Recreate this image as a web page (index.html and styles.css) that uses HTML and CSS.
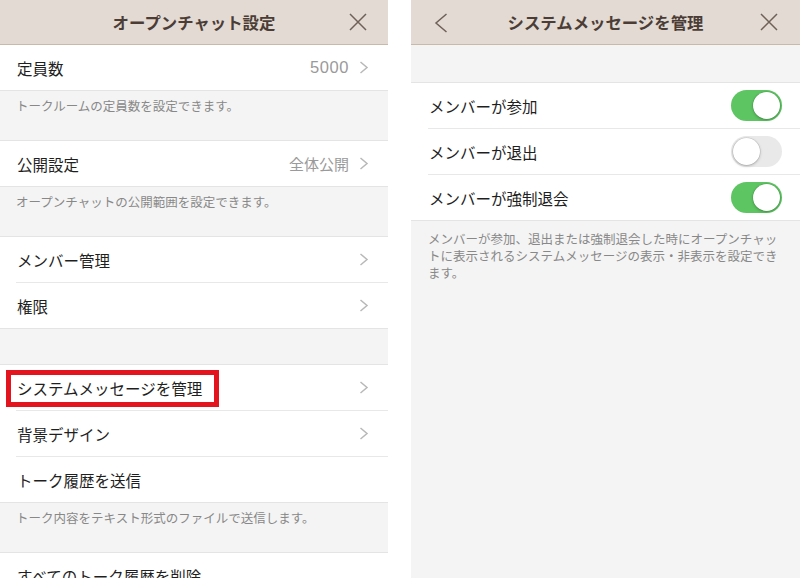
FILE: index.html
```html
<!DOCTYPE html>
<html lang="ja">

<head>
    <meta charset="UTF-8">
    <meta name="viewport" content="width=device-width, initial-scale=1.0">
    <title>オープンチャット設定</title>
    <link rel="stylesheet" href="styles.css">
</head>

<body>
    <div class="screens">

        <div class="panel left">
            <div class="header">
                <div class="header-side"></div>
                <div class="title">オープンチャット設定</div>
                <div class="header-side end">
                    <svg class="close" width="18" height="18" viewBox="0 0 18 18"><path d="M1 1L17 17M17 1L1 17" /></svg>
                </div>
            </div>

            <div class="group no-top">
                <div class="row">
                    <div class="row-body">
                        <span class="label">定員数</span>
                        <span class="value num">5000</span>
                        <svg class="chev" width="10" height="13" viewBox="0 0 10 13"><path d="M1.5 1L8 6.5L1.5 12" /></svg>
                    </div>
                </div>
            </div>
            <div class="note">トークルームの定員数を設定できます。</div>

            <div class="group">
                <div class="row">
                    <div class="row-body">
                        <span class="label">公開設定</span>
                        <span class="value">全体公開</span>
                        <svg class="chev" width="10" height="13" viewBox="0 0 10 13"><path d="M1.5 1L8 6.5L1.5 12" /></svg>
                    </div>
                </div>
            </div>
            <div class="note">オープンチャットの公開範囲を設定できます。</div>

            <div class="group">
                <div class="row">
                    <div class="row-body">
                        <span class="label">メンバー管理</span>
                        <svg class="chev" width="10" height="13" viewBox="0 0 10 13"><path d="M1.5 1L8 6.5L1.5 12" /></svg>
                    </div>
                </div>
                <div class="row">
                    <div class="row-body">
                        <span class="label">権限</span>
                        <svg class="chev" width="10" height="13" viewBox="0 0 10 13"><path d="M1.5 1L8 6.5L1.5 12" /></svg>
                    </div>
                </div>
            </div>
            <div class="spacer"></div>

            <div class="group">
                <div class="row marked">
                    <div class="row-body">
                        <span class="label">システムメッセージを管理</span>
                        <svg class="chev" width="10" height="13" viewBox="0 0 10 13"><path d="M1.5 1L8 6.5L1.5 12" /></svg>
                    </div>
                    <div class="highlight"></div>
                </div>
                <div class="row">
                    <div class="row-body">
                        <span class="label">背景デザイン</span>
                        <svg class="chev" width="10" height="13" viewBox="0 0 10 13"><path d="M1.5 1L8 6.5L1.5 12" /></svg>
                    </div>
                </div>
                <div class="row">
                    <div class="row-body">
                        <span class="label">トーク履歴を送信</span>
                    </div>
                </div>
            </div>
            <div class="note">トーク内容をテキスト形式のファイルで送信します。</div>

            <div class="group">
                <div class="row">
                    <div class="row-body">
                        <span class="label">すべてのトーク履歴を削除</span>
                    </div>
                </div>
            </div>
        </div>

        <div class="panel right">
            <div class="header">
                <div class="header-side">
                    <svg class="back" width="14" height="20" viewBox="0 0 14 20"><path d="M12.5 1L2 10L12.5 19" /></svg>
                </div>
                <div class="title">システムメッセージを管理</div>
                <div class="header-side end">
                    <svg class="close" width="18" height="18" viewBox="0 0 18 18"><path d="M1 1L17 17M17 1L1 17" /></svg>
                </div>
            </div>

            <div class="top-space"></div>

            <div class="group">
                <div class="row">
                    <div class="row-body">
                        <span class="label">メンバーが参加</span>
                        <div class="toggle on"><div class="knob"></div></div>
                    </div>
                </div>
                <div class="row">
                    <div class="row-body">
                        <span class="label">メンバーが退出</span>
                        <div class="toggle"><div class="knob"></div></div>
                    </div>
                </div>
                <div class="row">
                    <div class="row-body">
                        <span class="label">メンバーが強制退会</span>
                        <div class="toggle on"><div class="knob"></div></div>
                    </div>
                </div>
            </div>
            <div class="note long">メンバーが参加、退出または強制退会した時にオープンチャットに表示されるシステムメッセージの表示・非表示を設定できます。</div>
        </div>

    </div>
</body>

</html>
```

FILE: styles.css
```css
html,
body {
    margin: 0;
    height: 578px;
    overflow: hidden;
    background: #ffffff;
}

body {
    font-family: "Noto Sans CJK JP", "Noto Sans", sans-serif;
    color: #1f1f1f;
}

.screens {
    display: flex;
    gap: 23px;
    height: 578px;
}

.panel {
    background: #f4f4f4;
    display: flex;
    flex-direction: column;
}

.left {
    width: 388px;
}

.right {
    width: 389px;
}

/* header */

.header {
    height: 44px;
    background: #e2dad3;
    border-bottom: 1px solid #c8b9ab;
    display: grid;
    grid-template-columns: 1fr auto 1fr;
    align-items: center;
    flex-shrink: 0;
}

.title {
    font-size: 16.4px;
    font-weight: bold;
    color: #4b3d36;
    letter-spacing: 0;
}

.header-side {
    display: flex;
    align-items: center;
    padding-left: 23px;
}

.header-side.end {
    justify-content: flex-end;
    padding-left: 0;
    padding-right: 21px;
}

.right .header-side.end {
    padding-right: 22px;
}

.close path,
.back path {
    fill: none;
    stroke: #6f6058;
    stroke-width: 1.5;
}

.back {
    margin-top: 2px;
}

/* rows */

.group {
    background: #ffffff;
    border-top: 1px solid #e4e4e4;
    border-bottom: 1px solid #e4e4e4;
    flex-shrink: 0;
}

.group.no-top {
    border-top: none;
}

.row {
    padding-left: 16px;
    position: relative;
}

.right .row {
    padding-left: 17px;
}

.row-body {
    height: 45px;
    display: flex;
    align-items: center;
    border-bottom: 1px solid #e8e8e8;
    padding-right: 19px;
}

.right .row-body {
    padding-right: 18px;
}

.row:last-child .row-body {
    border-bottom: none;
}

.label {
    flex: 1;
    font-size: 15.5px;
    padding-left: 1px;
}

.value {
    font-size: 15px;
    color: #9a9a9a;
    margin-right: 10px;
}

.value.num {
    font-family: "Liberation Sans", sans-serif;
    font-size: 16.5px;
    letter-spacing: 0.6px;
}

.chev path {
    fill: none;
    stroke: #b8b8b8;
    stroke-width: 1.5;
}

.highlight {
    position: absolute;
    left: 6px;
    top: 5px;
    width: 203px;
    height: 27px;
    border: 5px solid #e3141e;
}

/* grey areas */

.note {
    font-size: 12.5px;
    line-height: 17px;
    color: #888888;
    padding: 6px 16px 0 16px;
    height: 43px;
    flex-shrink: 0;
}

.note.long {
    padding: 9px 16px 0 17px;
    height: auto;
}

.spacer {
    height: 35px;
    flex-shrink: 0;
}

.top-space {
    height: 37px;
    flex-shrink: 0;
}

/* toggles */

.toggle {
    width: 51px;
    height: 31px;
    border-radius: 16px;
    background: #e9e9e9;
    box-sizing: border-box;
    padding: 2px;
    display: flex;
    justify-content: flex-start;
}

.toggle.on {
    background: #5dc562;
    justify-content: flex-end;
}

.knob {
    width: 27px;
    height: 27px;
    border-radius: 50%;
    background: #ffffff;
    box-shadow: 0 1px 3px rgba(0, 0, 0, 0.25), 0 0 0 0.5px rgba(0, 0, 0, 0.12);
}
```
